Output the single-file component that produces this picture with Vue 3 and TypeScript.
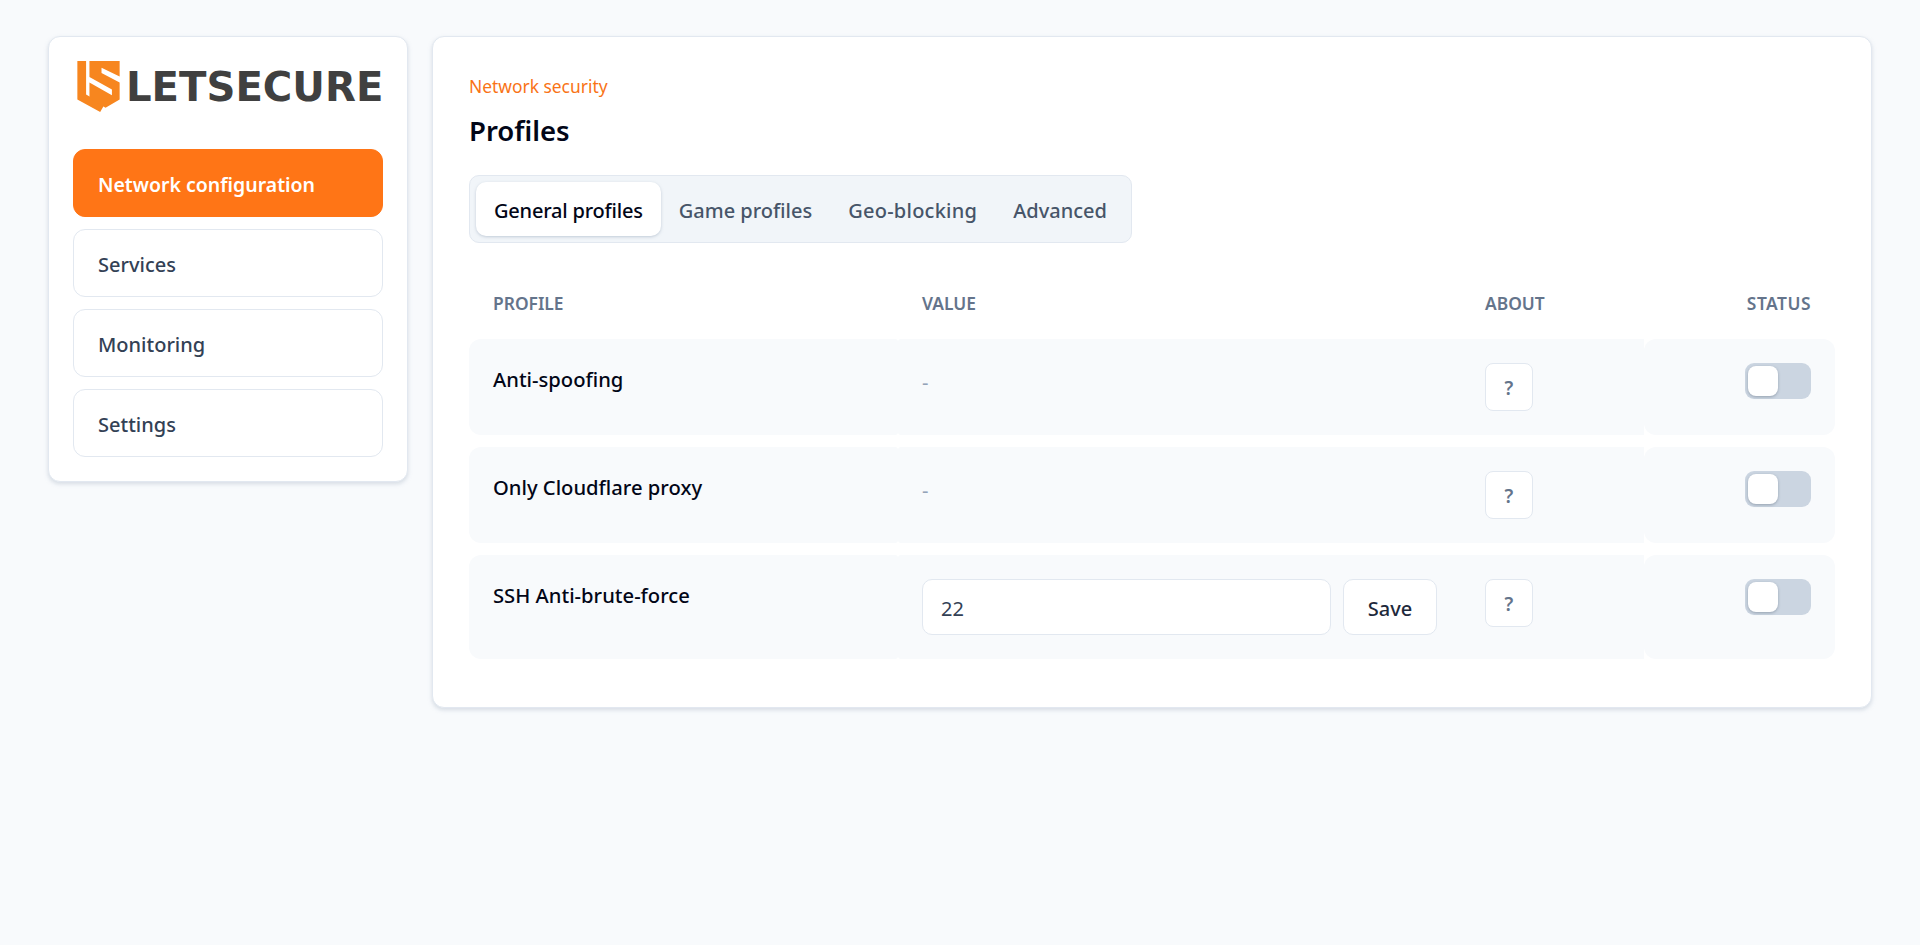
<script setup lang="ts">
interface Row {
  name: string
  value: string | null
}

const navItems: string[] = ['Network configuration', 'Services', 'Monitoring', 'Settings']
const tabs: string[] = ['General profiles', 'Game profiles', 'Geo-blocking', 'Advanced']
const rows: Row[] = [
  { name: 'Anti-spoofing', value: null },
  { name: 'Only Cloudflare proxy', value: null },
  { name: 'SSH Anti-brute-force', value: '22' },
]
</script>

<template>
  <div class="page">
    <aside class="sidebar">
      <div class="logo">
        <svg class="shield" viewBox="12 10 126 155" width="43" height="52">
          <path fill="#f7861f" d="M12 10H38V110L92 141L80 162L12 125Z" />
          <path fill="#f7861f" d="M48 10H138V56L84 30V46L138 74V125L96 149L48 120V74L115 112V95L48 58Z" />
        </svg>
        <span class="logo-text">LETSECURE</span>
      </div>
      <nav class="nav">
        <a v-for="(item, i) in navItems" :key="item" class="nav-item" :class="{ active: i === 0 }">{{ item }}</a>
      </nav>
    </aside>

    <main class="content">
      <div class="eyebrow">Network security</div>
      <h1 class="title">Profiles</h1>
      <div class="tabs">
        <button v-for="(tab, i) in tabs" :key="tab" class="tab" :class="{ active: i === 0 }">{{ tab }}</button>
      </div>
      <table class="table">
        <thead>
          <tr>
            <th class="col-profile">Profile</th>
            <th class="col-value">Value</th>
            <th class="col-about">About</th>
            <th class="col-status">Status</th>
          </tr>
        </thead>
        <tbody>
          <tr v-for="row in rows" :key="row.name">
            <td class="name">{{ row.name }}</td>
            <td class="value">
              <span v-if="row.value === null" class="dash">-</span>
              <div v-else class="value-form">
                <input class="input" :value="row.value" />
                <button class="save">Save</button>
              </div>
            </td>
            <td class="about"><button class="help">?</button></td>
            <td class="status">
              <span class="toggle"><span class="knob"></span></span>
            </td>
          </tr>
        </tbody>
      </table>
    </main>
  </div>
</template>

<style>
html, body {
  margin: 0;
  background: #f8fafc;
}
</style>

<style scoped>
.page {
  display: flex;
  align-items: flex-start;
  gap: 24px;
  padding: 36px 48px 0;
  font-family: "Noto Sans", sans-serif;
  color: #020617;
  min-height: 909px;
}
.sidebar {
  width: 360px;
  flex: none;
  box-sizing: border-box;
  padding: 24px;
  background: #fff;
  border: 1px solid #e2e8f0;
  border-radius: 12px;
  box-shadow: 0 2px 4px rgba(148, 163, 184, 0.35);
}
.logo {
  display: flex;
  align-items: center;
  gap: 6px;
  height: 52px;
  margin-bottom: 36px;
  padding-left: 4px;
}
.shield { flex: none; }
.logo-text {
  font-family: "DejaVu Sans", sans-serif;
  font-weight: 700;
  font-size: 40.2px;
  color: #404040;
  line-height: 1;
}
.nav {
  display: flex;
  flex-direction: column;
  gap: 12px;
}
.nav-item {
  box-sizing: border-box;
  height: 68px;
  display: flex;
  align-items: center;
  padding: 2px 24px 0;
  border: 1px solid #e2e8f0;
  border-radius: 12px;
  background: #fff;
  color: #334155;
  font-size: 20px;
  font-weight: 500;
}
.nav-item.active {
  background: #ff7516;
  border-color: #ff7516;
  color: #fff;
  font-size: 19.5px;
  font-weight: 600;
}
.content {
  flex: 1;
  box-sizing: border-box;
  padding: 37px 36px 36px;
  background: #fff;
  border: 1px solid #e2e8f0;
  border-radius: 12px;
  box-shadow: 0 2px 4px rgba(148, 163, 184, 0.35);
}
.eyebrow {
  color: #f97316;
  font-size: 17.4px;
  line-height: 24px;
}
.title {
  margin: 12px 0 0;
  font-size: 27.5px;
  font-weight: 600;
  line-height: 42px;
}
.tabs {
  display: inline-flex;
  margin-top: 23px;
  padding: 6px;
  border: 1px solid #e2e8f0;
  border-radius: 10px;
  background: #f1f5f9;
}
.tab {
  height: 54px;
  padding: 2px 18px 0;
  border: 0;
  border-radius: 10px;
  background: transparent;
  color: #475569;
  font: 500 20px "Noto Sans", sans-serif;
}
.tab:nth-child(3) { letter-spacing: 0.25px; }
.tab.active {
  background: #fff;
  color: #020617;
  letter-spacing: -0.2px;
  box-shadow: 0 1px 3px rgba(148, 163, 184, 0.5);
}
.table {
  width: 100%;
  margin-top: 24px;
  border-collapse: separate;
  border-spacing: 0 12px;
  table-layout: fixed;
}
th {
  box-sizing: border-box;
  padding: 12px 24px;
  text-align: left;
  text-transform: uppercase;
  color: #64748b;
  font-size: 17.4px;
  font-weight: 600;
  line-height: 24px;
}
.col-profile { width: 429px; }
.col-about { width: 183px; }
.col-status { width: 191px; text-align: right; letter-spacing: 0.5px; }
td {
  padding: 24px;
  background: #f8fafc;
  vertical-align: top;
  border-radius: 12px;
}
.name {
  font-size: 20.2px;
  font-weight: 500;
  line-height: 33px;
  border-radius: 12px 3px 3px 12px;
}
.dash {
  display: block;
  color: #94a3b8;
  font-size: 20px;
  line-height: 40px;
}
.value { border-radius: 3px 0 0 3px; }
.about { border-radius: 0; }
.status { text-align: right; }
.value-form {
  display: flex;
  gap: 12px;
}
.input {
  flex: 1;
  min-width: 0;
  box-sizing: border-box;
  height: 56px;
  padding: 2px 18px 0;
  border: 1px solid #e2e8f0;
  border-radius: 10px;
  background: #fff;
  color: #334155;
  font: 400 20px "Noto Sans", sans-serif;
  outline: none;
}
.save {
  width: 94px;
  height: 56px;
  padding: 2px 0 0;
  border: 1px solid #e2e8f0;
  border-radius: 10px;
  background: #fff;
  color: #1e293b;
  font: 500 20px "Noto Sans", sans-serif;
}
.help {
  display: block;
  box-sizing: border-box;
  width: 48px;
  height: 48px;
  padding: 2px 0 0;
  border: 1px solid #e2e8f0;
  border-radius: 8px;
  background: #fff;
  color: #64748b;
  font: 600 19px "Noto Sans", sans-serif;
}
.toggle {
  display: inline-block;
  position: relative;
  vertical-align: top;
  width: 66px;
  height: 36px;
  border-radius: 9px;
  background: #cbd5e1;
}
.knob {
  position: absolute;
  left: 3px;
  top: 3px;
  width: 30px;
  height: 30px;
  border-radius: 8px;
  background: #fff;
  box-shadow: 0 1px 3px rgba(71, 85, 105, 0.4);
}
</style>
